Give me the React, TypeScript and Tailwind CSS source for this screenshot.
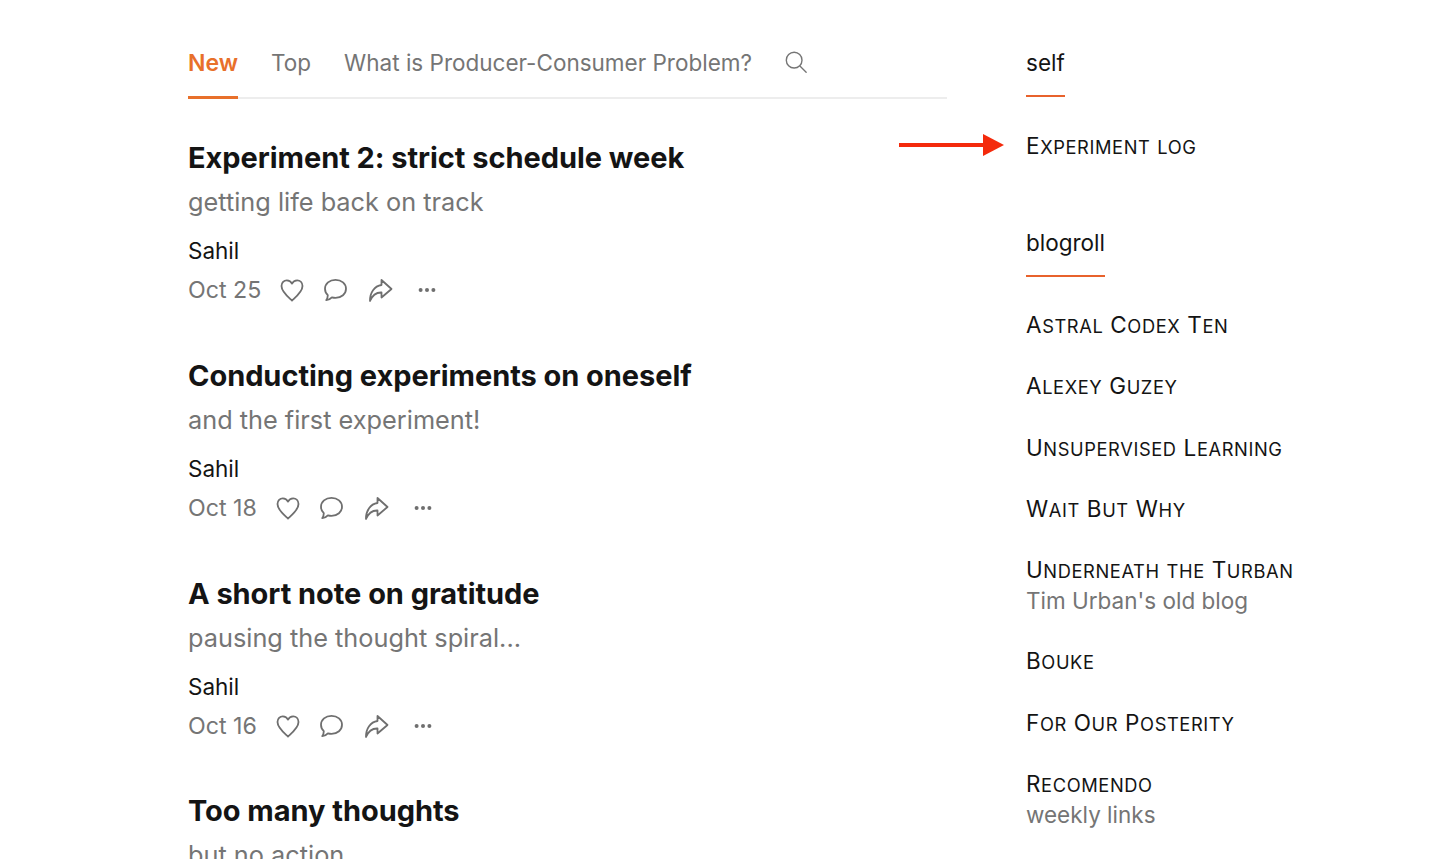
import React from "react";

const posts = [
  { title: "Experiment 2: strict schedule week", sub: "getting life back on track", date: "Oct 25" },
  { title: "Conducting experiments on oneself", sub: "and the first experiment!", date: "Oct 18" },
  { title: "A short note on gratitude", sub: "pausing the thought spiral...", date: "Oct 16" },
];

const blogroll = [
  { name: "Astral Codex Ten" },
  { name: "Alexey Guzey" },
  { name: "Unsupervised Learning" },
  { name: "Wait But Why" },
  { name: "Underneath the Turban", note: "Tim Urban's old blog" },
  { name: "Bouke" },
  { name: "For Our Posterity" },
  { name: "Recomendo", note: "weekly links" },
];

const SmallCaps = ({ text }: { text: string }) => (
  <div className="h-[32px] text-[22.5px] leading-[32px] tracking-[0.6px] text-[#141414] uppercase whitespace-pre">
    {text.split(/([a-z]+)/).map((run, i) =>
      /[a-z]/.test(run) ? (
        <span key={i} className="text-[18.3px] leading-none">
          {run}
        </span>
      ) : (
        <span key={i} className="leading-none">{run}</span>
      )
    )}
  </div>
);

const Actions = () => (
  <div className="flex items-center text-[#6f6f6f]">
    <svg width="26" height="26" viewBox="0 0 26 26" fill="none" stroke="currentColor" strokeWidth="1.8" strokeLinejoin="round" className="ml-[18px]">
      <path d="M13 23.5 C9 19.8 2.5 14.8 2.5 9 C2.5 5.5 5 3.3 7.8 3.3 C10 3.3 12 4.5 13 6.6 C14 4.5 16 3.3 18.2 3.3 C21 3.3 23.5 5.5 23.5 9 C23.5 14.8 17 19.8 13 23.5 Z" />
    </svg>
    <svg width="26" height="26" viewBox="0 0 26 26" fill="none" stroke="currentColor" strokeWidth="1.8" strokeLinejoin="round" className="ml-[17px]">
      <path d="M13.5 2.8 C19.5 2.8 24 6.7 24 11.8 C24 16.9 19.5 20.8 13.5 20.8 C12.2 20.8 11 20.6 9.9 20.3 C8.5 21.8 6.6 22.9 4.2 23.2 C5.3 21.6 5.8 20 5.8 18.2 C3.9 16.5 3 14.4 3 11.8 C3 6.7 7.5 2.8 13.5 2.8 Z" />
    </svg>
    <svg width="26" height="26" viewBox="0 0 26 26" fill="none" stroke="currentColor" strokeWidth="1.8" strokeLinejoin="round" className="ml-[19px]">
      <path d="M14.5 3 L24.5 12 L14.5 20.5 L14.5 15.5 C9.5 15.3 5.5 18 3 24 C2.8 15.5 7.5 9 14.5 8 Z" />
    </svg>
    <svg width="18" height="6" viewBox="0 0 18 6" fill="currentColor" className="ml-[25px]">
      <circle cx="2.6" cy="3" r="2" />
      <circle cx="9" cy="3" r="2" />
      <circle cx="15.4" cy="3" r="2" />
    </svg>
  </div>
);

const Post = ({ title, sub, date }: { title: string; sub: string; date: string }) => (
  <article className="h-[217.8px]">
    <h2 className="text-[29px] leading-[36px] font-bold text-[#141414] tracking-[-0.05px]">{title}</h2>
    <p className="mt-[8px] text-[25.3px] leading-[36px] text-[#757575]">{sub}</p>
    <p className="mt-[15px] text-[22.5px] leading-[32px] text-[#141414]">Sahil</p>
    <div className="mt-[7px] flex items-center h-[32px]">
      <span className="text-[23.2px] leading-[32px] text-[#757575]">{date}</span>
      <Actions />
    </div>
  </article>
);

const SideHeading = ({ label }: { label: string }) => (
  <div className="inline-block align-top">
    <h3 className="text-[22.5px] leading-[32px] text-[#141414]">{label}</h3>
    <div className="mt-[16px] h-[2px] bg-[#e8622c]" />
  </div>
);

export default function App() {
  return (
    <div className="h-[859px] overflow-hidden bg-white font-['Inter',sans-serif] flex pl-[188px]">
      <main className="w-[759px] pt-[46px]">
        <nav className="flex items-start h-[53px] border-b-2 border-[#ededed] text-[22.5px] leading-[34px] text-[#757575]">
          <div className="h-[53px] border-b-[3px] border-[#e8702a] font-semibold text-[23px] text-[#e8702a]">New</div>
          <div className="ml-[33px]">Top</div>
          <div className="ml-[33px]">What is Producer-Consumer Problem?</div>
          <svg width="24" height="24" viewBox="0 0 26 26" fill="none" stroke="currentColor" strokeWidth="1.5" strokeLinecap="round" className="ml-[32px] mt-[4px]">
            <circle cx="11" cy="11" r="8.5" />
            <path d="M17.5 17.5 L24 24" />
          </svg>
        </nav>
        <div className="mt-[41px]">
          {posts.map((p) => (
            <Post key={p.title} {...p} />
          ))}
          <h2 className="text-[29px] leading-[36px] font-bold text-[#141414] tracking-[-0.05px]">Too many thoughts</h2>
          <p className="mt-[8px] text-[25.3px] leading-[36px] text-[#757575]">but no action</p>
        </div>
      </main>

      <div className="relative ml-[79px] pt-[47px] flex-1">
        <svg width="105" height="22" viewBox="0 0 105 22" className="absolute left-[-127px] top-[134px]">
          <rect x="0" y="9" width="86" height="4" fill="#f42a0c" />
          <path d="M84 0 L105 11 L84 22 Z" fill="#f42a0c" />
        </svg>
        <SideHeading label="self" />
        <div className="mt-[33px]">
          <SmallCaps text="Experiment log" />
        </div>
        <div className="mt-[65px]">
          <SideHeading label="blogroll" />
        </div>
        <ul className="mt-[32px]">
          {blogroll.map((b) => (
            <li key={b.name} className="mb-[29.3px]">
              <SmallCaps text={b.name} />
              {b.note && <div className="text-[22.5px] leading-[30px] text-[#757575]">{b.note}</div>}
            </li>
          ))}
        </ul>
      </div>
    </div>
  );
}
